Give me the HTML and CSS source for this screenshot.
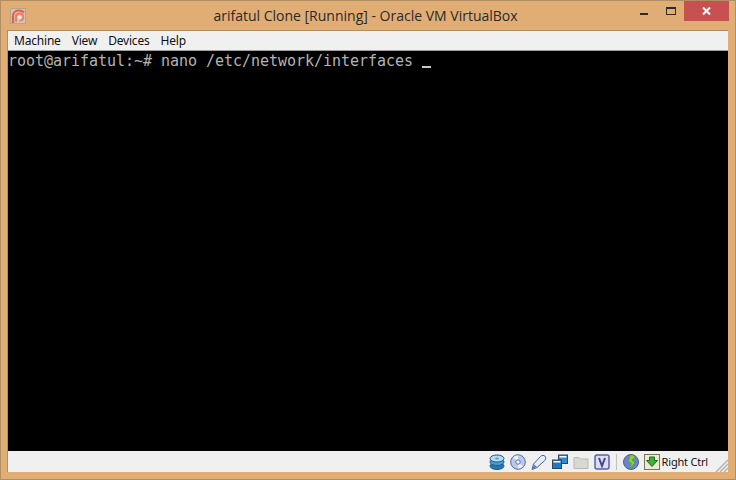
FILE: index.html
```html
<!DOCTYPE html>
<html lang="en">
<head>
<meta charset="utf-8">
<title>arifatul Clone [Running] - Oracle VM VirtualBox</title>
<link rel="stylesheet" href="styles.css">
</head>
<body>
<div class="window">
  <header class="titlebar">
    <svg class="app-icon" width="16" height="16" viewBox="0 0 16 16">
      <rect x="0.500" y="0.500" width="15" height="15" fill="#d8c4b2" stroke="#b7a594"/>
      <path d="M3 15V8C3 4 6 2.500 9 2.500c2.500 0 4 1 5 2" fill="none" stroke="#e5603f" stroke-width="2.200"/>
      <path d="M6 14V9c0-2 1.500-3.500 3.500-3.500 2.300 0 3.800 1.700 3.800 3.700 0 2-1.600 3.500-3.800 3.500" fill="none" stroke="#ea7d60" stroke-width="1.800"/>
      <circle cx="9.500" cy="9.300" r="1.700" fill="#f9f0e8"/>
    </svg>
    <div class="title">arifatul Clone [Running] - Oracle VM VirtualBox</div>
    <div class="controls">
      <div class="ctl first"><span class="min"></span></div>
      <div class="ctl"><span class="max"></span></div>
      <div class="close">
        <svg width="9" height="8" viewBox="0 0 9 8"><path d="M1 0.500 8 7.500M8 0.500 1 7.500" stroke="#fff" stroke-width="2"/></svg>
      </div>
    </div>
  </header>
  <div class="client">
    <nav class="menubar">
      <span>Machine</span><span>View</span><span>Devices</span><span>Help</span>
    </nav>
    <main class="screen">root@arifatul:~# nano /etc/network/interfaces <span class="cursor"></span></main>
    <footer class="statusbar">
      <svg class="ic" width="16" height="16" viewBox="0 0 16 16">
        <ellipse cx="8" cy="12" rx="7" ry="3.500" fill="#2478ad" stroke="#1d5a86"/>
        <ellipse cx="8" cy="8" rx="7" ry="3.500" fill="#4c9fd2" stroke="#1d5a86"/>
        <ellipse cx="8" cy="4.500" rx="7" ry="3.500" fill="#b4dcf2" stroke="#1d5a86"/>
        <ellipse cx="8" cy="4.500" rx="2" ry="1" fill="#5f9fc8"/>
      </svg>
      <svg class="ic" width="16" height="16" viewBox="0 0 16 16">
        <circle cx="8" cy="8" r="7.300" fill="#bcc9e8" stroke="#4f6fa8"/>
        <path d="M8 8 3 3.500A7 7 0 0 1 8 1.500zM8 8l5 4.500A7 7 0 0 1 8 14.500z" fill="#f0eef8"/>
        <circle cx="8" cy="8" r="2.200" fill="#fff" stroke="#4f6fa8"/>
      </svg>
      <svg class="ic" width="16" height="16" viewBox="0 0 16 16">
        <path d="M1 15.500 2.500 10 9.500 2.500c1.500-1.500 3.500-1.300 4.500-.3s1 2.800-.3 4.300L6 13.500z" fill="#e8ecf6" stroke="#4a5f95"/>
        <path d="M1.500 15 3 10.500l3 2.500z" fill="#6178b4"/>
      </svg>
      <svg class="ic" width="16" height="16" viewBox="0 0 16 16">
        <rect x="6.500" y="1" width="9" height="8.500" fill="#2f8ad4" stroke="#30445c"/>
        <rect x="7.500" y="2" width="7" height="1.500" fill="#fff"/>
        <rect x="0.500" y="6" width="9" height="8.500" fill="#1f78c4" stroke="#30445c"/>
        <rect x="1.500" y="7" width="7" height="1.500" fill="#fff"/>
      </svg>
      <svg class="ic" width="16" height="16" viewBox="0 0 16 16">
        <path d="M1 14.500V3.500h5l1.500 1.500H15v9.500z" fill="#d8d8d4" stroke="#b8b8b2"/>
      </svg>
      <svg class="ic" width="16" height="16" viewBox="0 0 16 16">
        <rect x="1" y="1" width="14" height="14" rx="2" fill="#dcdcf0" stroke="#5e5ea8" stroke-width="1.500"/>
        <path d="M5 4l3 8 3-8" fill="none" stroke="#46468c" stroke-width="2"/>
      </svg>
      <span class="sep"></span>
      <svg class="ic" width="16" height="16" viewBox="0 0 16 16">
        <circle cx="8" cy="8" r="7.500" fill="#6a86c4" stroke="#4a5f95"/>
        <path d="M7 1.500c3-1 5 0 4.500 2L9 6l3 2.500-5 6 1.500-5L5.500 7z" fill="#86d62a" stroke="#4f9a10" stroke-width=".5"/>
      </svg>
      <svg class="ic" width="16" height="16" viewBox="0 0 16 16">
        <rect x="0.500" y="0.500" width="15" height="15" fill="#ecead4" stroke="#77745c"/>
        <path d="M5.500 3h5v3.500H13.500L8 12.500 2.500 6.500h3z" fill="#3fae3a" stroke="#1c6a1c"/>
      </svg>
      <span class="hostkey">Right Ctrl</span>
      <svg class="grip" width="13" height="13" viewBox="0 0 13 13">
        <path d="M13 1 1 13M13 5 5 13M13 9 9 13" stroke="#b4b4b4" stroke-width="1.500"/>
      </svg>
    </footer>
  </div>
</div>
</body>
</html>
```
FILE: styles.css
```css
html, body {
  margin: 0;
  padding: 0;
  width: 736px;
  height: 480px;
  overflow: hidden;
}
.window {
  box-sizing: border-box;
  width: 736px;
  height: 480px;
  background: #e0ae75;
  border: 1px solid #b08d62;
  display: flex;
  flex-direction: column;
  padding: 0 7px 7px 6px;
}
.titlebar {
  height: 29px;
  flex: none;
  display: flex;
  align-items: flex-start;
  position: relative;
  color: #2a2a2a;
  font-family: "Open Sans", "Liberation Sans", sans-serif;
  font-size: 14px;
}
.app-icon {
  margin: 7px 0 0 3px;
}
.title {
  position: absolute;
  left: 0;
  right: 0;
  top: 5px;
  padding-right: 4px;
  line-height: 20px;
  text-align: center;
}
.controls {
  margin-left: auto;
  margin-right: -1px;
  display: flex;
  align-items: flex-start;
  height: 21px;
}
.ctl {
  width: 26px;
  height: 21px;
  display: flex;
  align-items: center;
  justify-content: center;
}
.first {
  margin-right: 1px;
}
.min {
  display: block;
  width: 8px;
  height: 2px;
  background: #2b2b2b;
  margin-top: 5px;
}
.max {
  display: block;
  box-sizing: border-box;
  width: 10px;
  height: 8px;
  border: 1px solid #2b2b2b;
  border-top-width: 2px;
  margin-top: -1px;
}
.close {
  width: 45px;
  height: 20px;
  background: #c75050;
  display: flex;
  align-items: center;
  justify-content: center;
}
.client {
  flex: 1;
  min-height: 0;
  display: flex;
  flex-direction: column;
  background: #f0f0f0;
  border: 1px solid #b08d62;
  border-bottom: 0;
  border-right: 0;
}
.menubar {
  height: 19px;
  flex: none;
  display: flex;
  gap: 11px;
  padding-left: 6px;
  align-items: center;
  background: #f0f0f0;
  border-bottom: 1px solid #a0a0a0;
  font-family: "Noto Sans", "Open Sans", sans-serif;
  font-size: 12px;
  letter-spacing: -0.2px;
  color: #111;
}
.screen {
  flex: 1;
  min-height: 0;
  background: #000;
  color: #b4b4b4;
  font-family: "DejaVu Sans Mono", "Liberation Mono", monospace;
  font-size: 15px;
  letter-spacing: -0.03px;
  font-weight: 400;
  line-height: 18px;
  padding-top: 1px;
  white-space: pre;
}
.cursor {
  display: inline-block;
  width: 9px;
  height: 2px;
  background: #c8c8c8;
  vertical-align: -2px;
}
.statusbar {
  height: 21px;
  flex: none;
  display: flex;
  align-items: center;
  justify-content: flex-end;
  gap: 5px;
  background: #f0f0f0;
  font-family: "Noto Sans", "Open Sans", sans-serif;
  font-size: 11px;
  letter-spacing: -0.2px;
  color: #111;
  position: relative;
  padding-right: 20px;
}
.ic {
  flex: none;
}
.sep {
  width: 1px;
  height: 16px;
  background: #c0c0c0;
  margin: 0 1px;
}
.hostkey {
  margin-left: -3px;
}
.grip {
  position: absolute;
  right: 0;
  bottom: 0;
}
```
